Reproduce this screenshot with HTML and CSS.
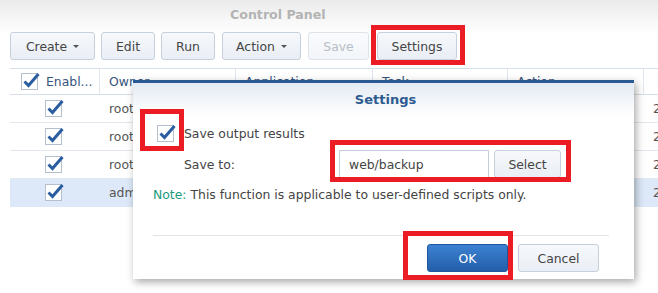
FILE: index.html
```html
<!DOCTYPE html>
<html>
<head>
<meta charset="utf-8">
<link rel="stylesheet" href="styles.css">
</head>
<body>
<div class="app">
  <div class="titlebar">Control Panel</div>
  <div class="toolbar">
    <button class="btn w-create">Create <span class="caret"></span></button>
    <button class="btn w-edit">Edit</button>
    <button class="btn w-run">Run</button>
    <button class="btn w-action">Action <span class="caret"></span></button>
    <button class="btn w-save disabled">Save</button>
    <button class="btn w-settings">Settings</button>
  </div>
  <div class="grid">
    <div class="row head">
      <div class="cell c1 hc"><svg class="cb" viewBox="0 0 20 20"><rect x="0.5" y="3.5" width="16" height="16" fill="#fff" stroke="#b4c0ce"/><path d="M3.5 11.5 L7.5 15.5 L17.5 4" fill="none" stroke="#2a5d9f" stroke-width="3" stroke-linejoin="miter"/></svg><span>Enabl...</span></div>
      <div class="cell c2">Owner</div>
      <div class="cell c3">Application</div>
      <div class="cell c4">Task</div>
      <div class="cell c5">Action</div>
      <div class="cell c6"></div>
    </div>
    <div class="row">
      <div class="cell c1 cc"><svg class="cb" viewBox="0 0 20 20"><rect x="0.5" y="3.5" width="16" height="16" fill="#fff" stroke="#b4c0ce"/><path d="M3.5 11.5 L7.5 15.5 L17.5 4" fill="none" stroke="#2a5d9f" stroke-width="3"/></svg></div>
      <div class="cell c2">root</div>
      <div class="cell c3"></div><div class="cell c4"></div><div class="cell c5"></div>
      <div class="cell c6">2</div>
    </div>
    <div class="row">
      <div class="cell c1 cc"><svg class="cb" viewBox="0 0 20 20"><rect x="0.5" y="3.5" width="16" height="16" fill="#fff" stroke="#b4c0ce"/><path d="M3.5 11.5 L7.5 15.5 L17.5 4" fill="none" stroke="#2a5d9f" stroke-width="3"/></svg></div>
      <div class="cell c2">root</div>
      <div class="cell c3"></div><div class="cell c4"></div><div class="cell c5"></div>
      <div class="cell c6">2</div>
    </div>
    <div class="row">
      <div class="cell c1 cc"><svg class="cb" viewBox="0 0 20 20"><rect x="0.5" y="3.5" width="16" height="16" fill="#fff" stroke="#b4c0ce"/><path d="M3.5 11.5 L7.5 15.5 L17.5 4" fill="none" stroke="#2a5d9f" stroke-width="3"/></svg></div>
      <div class="cell c2">root</div>
      <div class="cell c3"></div><div class="cell c4"></div><div class="cell c5"></div>
      <div class="cell c6">2</div>
    </div>
    <div class="row sel">
      <div class="cell c1 cc"><svg class="cb" viewBox="0 0 20 20"><rect x="0.5" y="3.5" width="16" height="16" fill="#fff" stroke="#b4c0ce"/><path d="M3.5 11.5 L7.5 15.5 L17.5 4" fill="none" stroke="#2a5d9f" stroke-width="3"/></svg></div>
      <div class="cell c2">admin</div>
      <div class="cell c3"></div><div class="cell c4"></div><div class="cell c5"></div>
      <div class="cell c6">2</div>
    </div>
  </div>

  <div class="dialog">
    <div class="dlg-head">Settings</div>
    <div class="dlg-body">
      <div class="opt">
        <svg class="cb" viewBox="0 0 20 20"><rect x="0.5" y="3.5" width="16" height="16" fill="#fff" stroke="#b4c0ce"/><path d="M3.5 11.5 L7.5 15.5 L17.5 4" fill="none" stroke="#2a5d9f" stroke-width="3"/></svg>
        <span>Save output results</span>
      </div>
      <div class="saveto">
        <span class="lbl">Save to:</span>
        <div class="field">web/backup</div>
        <button class="btn sel-btn">Select</button>
      </div>
      <div class="note"><span class="note-k">Note:</span> This function is applicable to user-defined scripts only.</div>
    </div>
    <div class="dlg-foot">
      <button class="btn ok">OK</button>
      <button class="btn cancel">Cancel</button>
    </div>
  </div>

  <div class="mark m-settings"></div>
  <div class="mark m-check"></div>
  <div class="mark m-path"></div>
  <div class="mark m-ok"></div>
</div>
</body>
</html>
```

FILE: styles.css
```css
html, body {
  margin: 0;
  padding: 0;
  background: #fff;
  overflow: hidden;
}
body {
  font-family: "DejaVu Sans", "Liberation Sans", sans-serif;
  font-size: 12.4px;
  color: #444;
}
.app {
  position: relative;
  width: 658px;
  height: 293px;
  overflow: hidden;
  background: linear-gradient(#eaeaea 0px, #f7f7f7 20px, #ffffff 34px);
}
.titlebar {
  height: 32px;
  box-sizing: border-box;
  padding: 7px 0 0 230px;
  font-weight: bold;
  font-size: 12.6px;
  color: #b3b3b3;
}
.toolbar {
  display: flex;
  gap: 6px;
  padding-left: 10px;
  height: 28px;
}
.btn {
  height: 28px;
  box-sizing: border-box;
  border: 1px solid #c6d0dc;
  border-radius: 3px;
  background: linear-gradient(#f6f8fb, #e9eef5);
  font-family: inherit;
  font-size: 12.4px;
  color: #444;
  padding: 0;
  display: flex;
  align-items: center;
  justify-content: center;
  gap: 6px;
}
.caret {
  width: 0;
  height: 0;
  border-left: 3px solid transparent;
  border-right: 3px solid transparent;
  border-top: 3px solid #555;
}
.w-create { width: 85px; }
.w-edit { width: 54px; }
.w-run { width: 54px; }
.w-action { width: 79px; margin-left: 1px; }
.w-save { width: 61px; margin-left: 1px; }
.w-settings { width: 80px; margin-left: 2px; }
.btn.disabled { color: #b8bec6; border-color: #dde3ea; background: linear-gradient(#fafbfd, #f2f5f9); }

.grid {
  margin: 8px 0 0 10px;
  width: 720px;
}
.row {
  display: flex;
  height: 28px;
  border-bottom: 1px solid #e3e8ee;
  box-sizing: border-box;
  align-items: center;
  color: #555;
}
.row.head {
  height: 27px;
  border-top: 1px solid #d6dee8;
  border-bottom: 1px solid #d6dee8;
  color: #37557d;
}
.row.sel { background: #dde9f8; border-bottom-color: #dde9f8; }
.cell {
  box-sizing: border-box;
  height: 100%;
  display: flex;
  align-items: center;
  padding-left: 9px;
  white-space: nowrap;
  overflow: hidden;
}
.head .cell { border-right: 1px solid #dfe6ee; }
.c1 { width: 90px; }
.c2 { width: 136px; }
.c3 { width: 137px; }
.c4 { width: 135px; }
.c5 { width: 136px; }
.c6 { width: 80px; }
.hc { padding-left: 11px; gap: 5px; }
.cc { justify-content: center; padding-left: 0; }
.cb { width: 20px; height: 20px; flex: none; margin-top: -3px; }

.dialog {
  position: absolute;
  left: 133px;
  top: 80px;
  width: 501px;
  height: 199px;
  box-sizing: border-box;
  background: #fff;
  border-top: 3px solid #2b5a94;
  box-shadow: 2px 3px 8px rgba(0,0,0,0.35);
  display: flex;
  flex-direction: column;
}
.dlg-head {
  height: 33px;
  flex: none;
  background: linear-gradient(#e4ebf3, #ffffff);
  display: flex;
  align-items: center;
  justify-content: center;
  font-weight: bold;
  font-size: 13px;
  color: #2d5b91;
  padding-left: 4px;
}
.dlg-body {
  padding: 6px 24px 0 20px;
  flex: 1;
}
.opt {
  display: flex;
  align-items: center;
  gap: 7px;
  padding-left: 4px;
  height: 22px;
}
.saveto {
  display: flex;
  align-items: center;
  height: 28px;
  margin-top: 6px;
  padding-left: 31px;
}
.lbl { width: 155px; }
.field {
  width: 150px;
  height: 28px;
  box-sizing: border-box;
  border: 1px solid #c6cfd9;
  display: flex;
  align-items: center;
  padding-left: 9px;
  color: #444;
}
.sel-btn { width: 67px; margin-left: 5px; }
.note {
  margin-top: 7px;
  height: 20px;
  line-height: 20px;
}
.note-k { color: #1c9a80; }
.dlg-foot {
  margin: 0 25px 0 20px;
  border-top: 1px solid #e0e4e9;
  height: 42px;
  display: flex;
  justify-content: flex-end;
  align-items: flex-start;
  padding-top: 8px;
  padding-right: 10px;
  gap: 10px;
  box-sizing: border-box;
  margin-bottom: 2px;
}
.ok {
  width: 81px;
  background: linear-gradient(#3c82d2, #235ea9);
  border-color: #1f58a0;
  color: #fff;
}
.cancel { width: 81px; }

.mark {
  position: absolute;
  border: 5px solid #ec1c24;
  box-sizing: border-box;
}
.m-settings { left: 371px; top: 25px; width: 94px; height: 40px; }
.m-check { left: 140px; top: 109px; width: 44px; height: 42px; }
.m-path { left: 330px; top: 140px; width: 241px; height: 42px; }
.m-ok { left: 403px; top: 231px; width: 110px; height: 49px; }
```
